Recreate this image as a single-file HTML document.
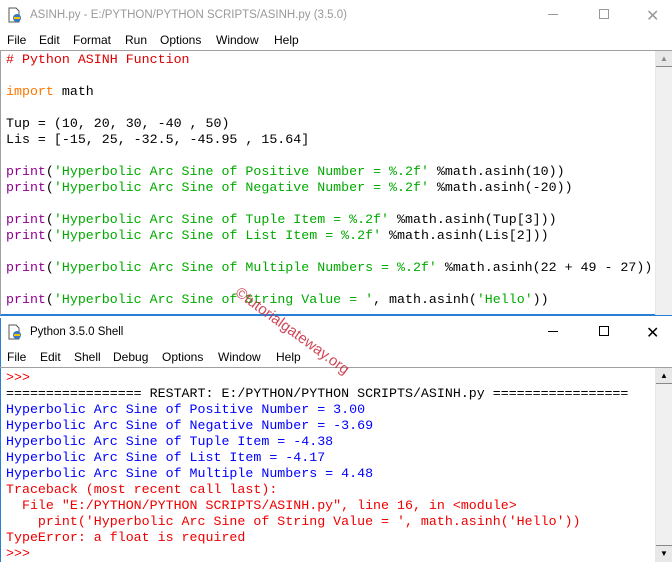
<!DOCTYPE html>
<html><head><meta charset="utf-8"><style>
*{margin:0;padding:0;box-sizing:border-box}
body{width:672px;height:562px;overflow:hidden;background:#fff;position:relative;font-family:"Liberation Sans",sans-serif}
.abs{position:absolute}
.title{font-size:11.5px;height:30px;line-height:30px;left:30px}
.menu{font-size:12px;height:20px;line-height:20px;left:0;width:672px}
.menu span{position:absolute;top:0}
.code{font-family:"Liberation Mono",monospace;font-size:13.3px;line-height:16px;white-space:pre;left:6px}
.k{color:#900090}.s{color:#00aa00}.c{color:#dd0000}.o{color:#ff7700}
.b{color:#0000ff}.r{color:#ee0000}
.sb{background:#f0f0f0;border-left:1px solid #e6e6e6}
</style></head><body>
<!-- editor window -->
<div class="abs" style="left:0;top:0;width:672px;height:316px;background:#fff;border-bottom:2px solid #2a7fd4"></div>
<div class="abs" style="left:7px;top:7px;width:14px;height:16px">
<svg width="16" height="16"><path d="M2 1h7l3 3v11H2z" fill="#fff" stroke="#555"/><circle cx="10" cy="11" r="4" fill="#3a78c0"/><path d="M7 11h6" stroke="#f5c400" stroke-width="2"/></svg></div>
<div class="abs title" style="color:#999">ASINH.py - E:/PYTHON/PYTHON SCRIPTS/ASINH.py (3.5.0)</div>
<div class="abs" style="left:548px;top:14px;width:10px;height:1px;background:#999"></div>
<div class="abs" style="left:599px;top:9px;width:10px;height:10px;border:1px solid #999"></div>
<div class="abs" style="left:646px;top:6px;font-size:16px;color:#999">✕</div>
<div class="abs menu" style="top:30px"><span style="left:7px">File</span><span style="left:39px">Edit</span><span style="left:73px">Format</span><span style="left:125px">Run</span><span style="left:160px">Options</span><span style="left:216px">Window</span><span style="left:274px">Help</span></div>
<div class="abs" style="left:0;top:50px;width:672px;height:1px;background:#a0a0a0"></div>
<div class="abs" style="left:0;top:51px;width:1px;height:264px;background:#a0a0a0"></div>
<div class="abs sb" style="left:655px;top:51px;width:17px;height:264px"></div>
<div class="abs" style="left:656px;top:51px;width:16px;height:16px;background:#e8e8e8;border-bottom:1px solid #888;font-size:8px;color:#888;text-align:center;line-height:16px">▲</div>
<div class="abs code" style="top:52px"><span class="c"># Python ASINH Function</span>

<span class="o">import</span> math

Tup = (10, 20, 30, -40 , 50)
Lis = [-15, 25, -32.5, -45.95 , 15.64]

<span class="k">print</span>(<span class="s">'Hyperbolic Arc Sine of Positive Number = %.2f'</span> %math.asinh(10))
<span class="k">print</span>(<span class="s">'Hyperbolic Arc Sine of Negative Number = %.2f'</span> %math.asinh(-20))

<span class="k">print</span>(<span class="s">'Hyperbolic Arc Sine of Tuple Item = %.2f'</span> %math.asinh(Tup[3]))
<span class="k">print</span>(<span class="s">'Hyperbolic Arc Sine of List Item = %.2f'</span> %math.asinh(Lis[2]))

<span class="k">print</span>(<span class="s">'Hyperbolic Arc Sine of Multiple Numbers = %.2f'</span> %math.asinh(22 + 49 - 27))

<span class="k">print</span>(<span class="s">'Hyperbolic Arc Sine of String Value = '</span>, math.asinh(<span class="s">'Hello'</span>))</div>
<!-- shell -->
<div class="abs" style="left:0;top:318px;width:1px;height:244px;background:#2a7fd4"></div>
<div class="abs" style="left:7px;top:324px;width:16px;height:16px">
<svg width="16" height="16"><path d="M2 1h7l3 3v11H2z" fill="#fff" stroke="#555"/><circle cx="10" cy="11" r="4" fill="#3a78c0"/><path d="M7 11h6" stroke="#f5c400" stroke-width="2"/></svg></div>
<div class="abs title" style="top:317px;color:#000">Python 3.5.0 Shell</div>
<div class="abs" style="left:548px;top:331px;width:10px;height:1px;background:#000"></div>
<div class="abs" style="left:599px;top:326px;width:10px;height:10px;border:1px solid #000"></div>
<div class="abs" style="left:646px;top:323px;font-size:16px;color:#000">✕</div>
<div class="abs menu" style="top:347px"><span style="left:7px">File</span><span style="left:40px">Edit</span><span style="left:74px">Shell</span><span style="left:113px">Debug</span><span style="left:162px">Options</span><span style="left:218px">Window</span><span style="left:276px">Help</span></div>
<div class="abs" style="left:0;top:367px;width:672px;height:1px;background:#a0a0a0"></div>
<div class="abs sb" style="left:655px;top:368px;width:17px;height:194px"></div>
<div class="abs" style="left:656px;top:368px;width:16px;height:16px;background:#e8e8e8;border-bottom:1px solid #888;font-size:8px;color:#000;text-align:center;line-height:16px">▲</div>
<div class="abs" style="left:656px;top:545px;width:16px;height:17px;background:#e8e8e8;border-top:1px solid #888;font-size:8px;color:#000;text-align:center;line-height:16px">▼</div>
<div class="abs code" style="top:370px"><span class="r">&gt;&gt;&gt;</span>
================= RESTART: E:/PYTHON/PYTHON SCRIPTS/ASINH.py =================
<span class="b">Hyperbolic Arc Sine of Positive Number = 3.00
Hyperbolic Arc Sine of Negative Number = -3.69
Hyperbolic Arc Sine of Tuple Item = -4.38
Hyperbolic Arc Sine of List Item = -4.17
Hyperbolic Arc Sine of Multiple Numbers = 4.48</span>
<span class="r">Traceback (most recent call last):
  File "E:/PYTHON/PYTHON SCRIPTS/ASINH.py", line 16, in &lt;module&gt;
    print('Hyperbolic Arc Sine of String Value = ', math.asinh('Hello'))
TypeError: a float is required
&gt;&gt;&gt;</span></div>
<div class="abs" style="left:242px;top:284px;font-size:15px;color:#c8283c;transform:rotate(36deg);transform-origin:0 0;white-space:nowrap;opacity:.85">©tutorialgateway.org</div>
</body></html>
